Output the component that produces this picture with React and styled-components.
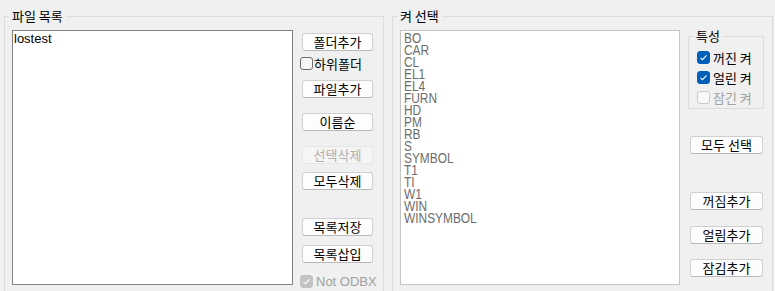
import React from 'react';
import styled, { createGlobalStyle } from 'styled-components';

const Global = createGlobalStyle`
  html, body { margin: 0; padding: 0; background: #f0f0f0; }
  body {
    width: 775px; height: 291px; overflow: hidden;
    font-family: "Noto Sans CJK KR", "Liberation Sans", sans-serif;
    font-size: 13px; color: #000;
  }
`;

const Page = styled.div`
  display: flex;
  gap: 8px;
  padding: 16px 0 0 4px;
  height: 300px;
  box-sizing: border-box;
`;

const Group = styled.div`
  position: relative;
  display: flex;
  align-items: flex-start;
  gap: ${p => p.$gap}px;
  width: ${p => p.$w}px;
  padding: 13px 0 0 7px;
  border: 1px solid #dcdcdc;
  box-sizing: border-box;
`;

const Legend = styled.span`
  position: absolute;
  top: -9px;
  left: ${p => p.$left ?? 4}px;
  padding: 0 3px;
  background: #f0f0f0;
  line-height: 16px;
  font-size: 13px;
  color: #000;
  white-space: nowrap;
`;

const ListBox = styled.div`
  width: ${p => p.$w}px;
  height: 255px;
  background: #fff;
  border: 1px solid ${p => p.$dark ? '#828282' : '#c4c4c4'};
  box-sizing: border-box;
  padding: ${p => p.$pad};
  overflow: hidden;
`;

const FileItem = styled.div`
  font-family: "Liberation Sans", Arial, sans-serif;
  font-size: 13px;
  line-height: 13px;
  color: #000;
`;

const LayerItem = styled.div`
  font-family: "Liberation Sans", Arial, sans-serif;
  font-size: 14px;
  line-height: 12px;
  height: 12px;
  color: #6d6d6d;
  white-space: nowrap;
  transform: scaleX(0.85);
  transform-origin: left center;
`;

const Column = styled.div`
  display: flex;
  flex-direction: column;
  width: ${p => p.$w}px;
`;

const Button = styled.button`
  margin: ${p => p.$top}px 0 0 2px;
  width: ${p => p.$w}px;
  height: 18px;
  padding: 0;
  font-family: "Noto Sans CJK KR", sans-serif;
  font-size: 13px;
  line-height: 16px;
  color: ${p => p.disabled ? '#b0b0b0' : '#000'};
  background: ${p => p.disabled ? '#f5f5f5' : '#fdfdfd'};
  border: 1px solid ${p => p.disabled ? '#e6e6e6' : '#d0d0d0'};
  border-bottom-color: ${p => p.disabled ? '#e6e6e6' : '#b8b8b8'};
  border-radius: 3px;
  box-sizing: border-box;
  white-space: nowrap;
`;

const CheckRow = styled.div`
  display: flex;
  align-items: center;
  gap: ${p => p.$gap ?? 3}px;
  height: ${p => p.$h ?? 16}px;
  margin-top: ${p => p.$top ?? 0}px;
  color: ${p => p.$disabled ? '#a0a0a0' : '#000'};
  font-family: ${p => p.$latin ? '"Liberation Sans", Arial, sans-serif' : '"Noto Sans CJK KR", sans-serif'};
  font-size: 13px;
  white-space: nowrap;
`;

const Box = styled.span`
  display: inline-flex;
  align-items: center;
  justify-content: center;
  width: 13px;
  height: 13px;
  box-sizing: border-box;
  border-radius: 3px;
  border: 1px solid ${p => p.$checked ? (p.$disabled ? '#c3c3c3' : '#005fb8') : (p.$disabled ? '#cacaca' : '#6e6e6e')};
  background: ${p => p.$checked ? (p.$disabled ? '#c3c3c3' : '#005fb8') : (p.$disabled ? '#f8f8f8' : '#f7f7f7')};
  flex: none;
`;

const SubGroup = styled.div`
  position: relative;
  display: flex;
  flex-direction: column;
  width: 76px;
  height: 73px;
  padding: 10px 0 0 8px;
  border: 1px solid #dcdcdc;
  box-sizing: border-box;
  margin-top: 6px;
`;

function Check({ checked, disabled, label, top, latin, gap, h }) {
  return (
    <CheckRow $top={top} $disabled={disabled} $latin={latin} $gap={gap} $h={h}>
      <Box $checked={checked} $disabled={disabled}>
        {checked && (
          <svg width="9" height="9" viewBox="0 0 9 9">
            <path d="M1.5 4.8 L3.5 6.7 L7.6 2.4" fill="none" stroke="#fff" strokeWidth="1.1" />
          </svg>
        )}
      </Box>
      <span>{label}</span>
    </CheckRow>
  );
}

const layers = ['BO', 'CAR', 'CL', 'EL1', 'EL4', 'FURN', 'HD', 'PM', 'RB', 'S', 'SYMBOL', 'T1', 'TI', 'W1', 'WIN', 'WINSYMBOL'];

export default function App() {
  return (
    <>
      <Global />
      <Page>
        <Group $w={380} $gap={7}>
          <Legend>파일 목록</Legend>
          <ListBox $w={281} $dark $pad="1px 1px">
            <FileItem>lostest</FileItem>
          </ListBox>
          <Column $w={73}>
            <Button $w={71} $top={3}>폴더추가</Button>
            <Check label="하위폴더" top={4} gap={1} />
            <Button $w={71} $top={9}>파일추가</Button>
            <Button $w={71} $top={15}>이름순</Button>
            <Button $w={71} $top={15} disabled>선택삭제</Button>
            <Button $w={71} $top={8}>모두삭제</Button>
            <Button $w={71} $top={28}>목록저장</Button>
            <Button $w={71} $top={9}>목록삽입</Button>
            <Check label="Not ODBX" checked disabled latin top={10} gap={3} />
          </Column>
        </Group>
        <Group $w={381} $gap={8}>
          <Legend>켜 선택</Legend>
          <ListBox $w={280} $pad="1px 3px">
            {layers.map(l => <LayerItem key={l}>{l}</LayerItem>)}
          </ListBox>
          <Column $w={76}>
            <SubGroup>
              <Legend $left={4}>특성</Legend>
              <Check label="꺼진 켜" checked h={20} />
              <Check label="얼린 켜" checked h={20} />
              <Check label="잠긴 켜" disabled h={20} />
            </SubGroup>
            <Button $w={73} $top={27}>모두 선택</Button>
            <Button $w={73} $top={38}>꺼짐추가</Button>
            <Button $w={73} $top={16}>얼림추가</Button>
            <Button $w={73} $top={15}>잠김추가</Button>
          </Column>
        </Group>
      </Page>
    </>
  );
}
